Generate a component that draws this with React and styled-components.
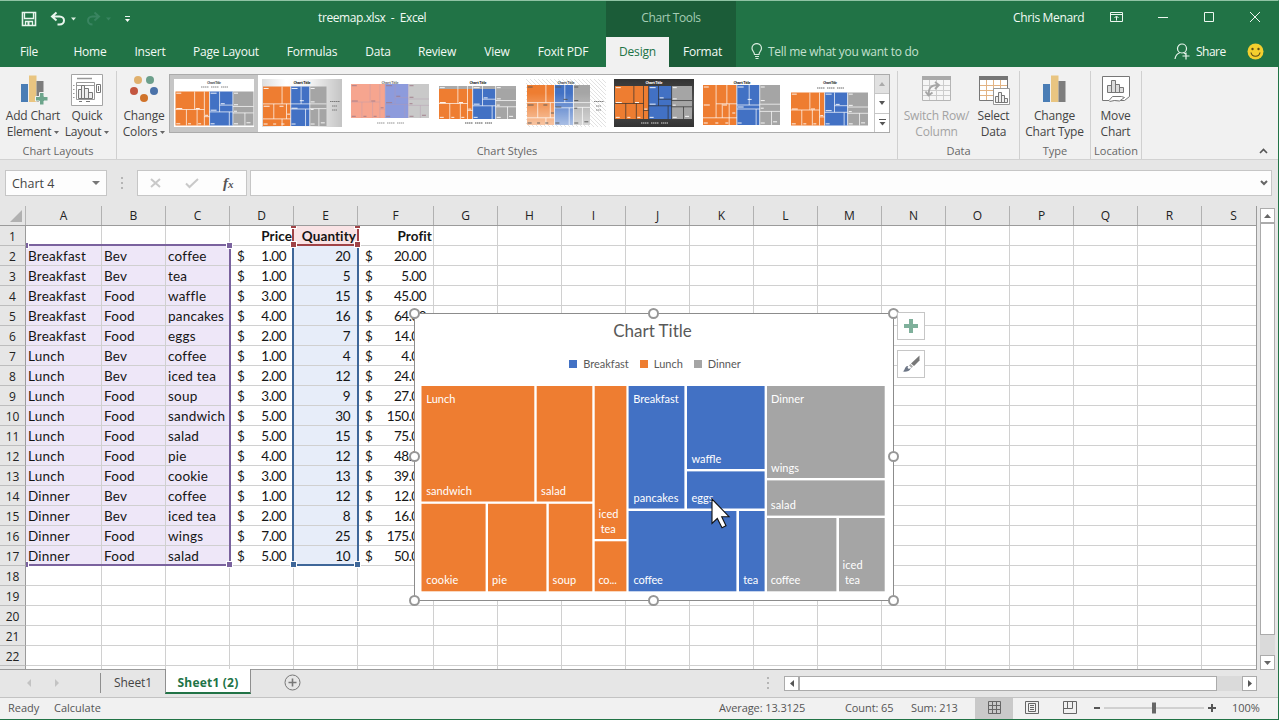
import React from "react";
import styled, { createGlobalStyle, css } from "styled-components";

// Column letters with their widths
const columns = [
  ["A", 76], ["B", 64], ["C", 64], ["D", 64], ["E", 64], ["F", 76],
  ["G", 64], ["H", 64], ["I", 64], ["J", 64], ["K", 64], ["L", 64],
  ["M", 64], ["N", 64], ["O", 64], ["P", 64], ["Q", 64], ["R", 64], ["S", 64],
];
const template = "26px " + columns.map((c) => `${c[1]}px`).join(" ");

const meals = [
  ["Breakfast", "Bev", "coffee", "1.00", 20, "20.00"],
  ["Breakfast", "Bev", "tea", "1.00", 5, "5.00"],
  ["Breakfast", "Food", "waffle", "3.00", 15, "45.00"],
  ["Breakfast", "Food", "pancakes", "4.00", 16, "64.00"],
  ["Breakfast", "Food", "eggs", "2.00", 7, "14.00"],
  ["Lunch", "Bev", "coffee", "1.00", 4, "4.00"],
  ["Lunch", "Bev", "iced tea", "2.00", 12, "24.00"],
  ["Lunch", "Food", "soup", "3.00", 9, "27.00"],
  ["Lunch", "Food", "sandwich", "5.00", 30, "150.00"],
  ["Lunch", "Food", "salad", "5.00", 15, "75.00"],
  ["Lunch", "Food", "pie", "4.00", 12, "48.00"],
  ["Lunch", "Food", "cookie", "3.00", 13, "39.00"],
  ["Dinner", "Bev", "coffee", "1.00", 12, "12.00"],
  ["Dinner", "Bev", "iced tea", "2.00", 8, "16.00"],
  ["Dinner", "Food", "wings", "7.00", 25, "175.00"],
  ["Dinner", "Food", "salad", "5.00", 10, "50.00"],
];

const tabs = [
  ["File", 58], ["Home", 64], ["Insert", 56], ["Page Layout", 96], ["Formulas", 76],
  ["Data", 56], ["Review", 62], ["View", 58], ["Foxit PDF", 74],
];

const BLUE = "#4271c4";
const ORANGE = "#ee7d31";
const GRAY = "#a5a5a5";

// x1, y1, x2, y2 inside the chart frame
const tiles = [
  [ORANGE, 7.5, 73, 120.3, 188.5],
  [ORANGE, 122.7, 73, 178.3, 188.5],
  [ORANGE, 180.7, 73, 212.4, 226],
  [ORANGE, 180.7, 228.3, 212.4, 278.3],
  [ORANGE, 7.5, 190.8, 71.6, 278.3],
  [ORANGE, 74, 190.8, 132.4, 278.3],
  [ORANGE, 134.8, 190.8, 178.3, 278.3],
  [BLUE, 214.6, 73, 270.4, 195.5],
  [BLUE, 273, 73, 350.6, 156],
  [BLUE, 273, 158.4, 350.6, 195.5],
  [BLUE, 214.6, 198, 322.4, 278.3],
  [BLUE, 325, 198, 350.6, 278.3],
  [GRAY, 353, 73, 470.7, 165],
  [GRAY, 353, 167.4, 470.7, 202.6],
  [GRAY, 353, 205, 422.4, 278.3],
  [GRAY, 425, 205, 470.7, 278.3],
];

// text, x, baseline, width
const tileLabels = [
  ["Lunch", 12.3, 89.5, 29], ["sandwich", 12.3, 181.5, 45.5], ["salad", 127, 181.5, 25],
  ["iced", 184.5, 204.5, 20], ["tea", 186.7, 219.5, 15], ["co...", 184.4, 270.5, 18.5],
  ["cookie", 12.3, 270.5, 32], ["pie", 78, 270.5, 15], ["soup", 138.6, 270.5, 23.5],
  ["Breakfast", 219.2, 89.5, 45.5], ["pancakes", 219.4, 188.5, 45], ["waffle", 277.4, 149.5, 30],
  ["eggs", 277.4, 188.5, 22], ["coffee", 219.4, 270.5, 29.5], ["tea", 329.2, 270.5, 15],
  ["Dinner", 357, 89.5, 33], ["wings", 357, 158.5, 28], ["salad", 356.8, 195.5, 25],
  ["coffee", 356.8, 270.5, 29.5], ["iced", 428.6, 255.5, 20], ["tea", 431, 270.5, 15],
];

// Divider lines of the previews, in fractions of the plot: x1, y1, x2, y2
const dividers = {
  wide: [
    [0, 0.53, 0.37, 0.53], [0.245, 0, 0.245, 0.53], [0.37, 0, 0.37, 1], [0.14, 0.53, 0.14, 1],
    [0.277, 0.53, 0.277, 1], [0.37, 0.74, 0.437, 0.74], [0.437, 0, 0.437, 1], [0.437, 0.6, 0.735, 0.6],
    [0.565, 0, 0.565, 0.6], [0.565, 0.4, 0.735, 0.4], [0.69, 0.6, 0.69, 1], [0.735, 0, 0.735, 1],
    [0.735, 0.44, 1, 0.44], [0.735, 0.63, 1, 0.63], [0.89, 0.63, 0.89, 1],
  ],
  narrow: [
    [0, 0.44, 0.437, 0.44], [0.3, 0, 0.3, 0.44], [0.17, 0.44, 0.17, 0.82], [0.37, 0.44, 0.37, 0.82],
    [0, 0.82, 0.437, 0.82], [0.3, 0.82, 0.3, 1], [0.437, 0, 0.437, 1], [0.437, 0.44, 0.737, 0.44],
    [0.6, 0, 0.6, 0.44], [0.437, 0.57, 0.737, 0.57], [0.67, 0.57, 0.67, 1], [0.737, 0, 0.737, 1],
    [0.737, 0.44, 1, 0.44], [0.737, 0.56, 1, 0.56], [0.88, 0.56, 0.88, 1],
  ],
  tall: [
    [0.17, 0, 0.17, 0.82], [0.31, 0, 0.31, 0.47], [0.17, 0.47, 0.44, 0.47], [0.25, 0.47, 0.25, 0.82],
    [0.34, 0.47, 0.34, 1], [0, 0.82, 0.44, 0.82], [0.44, 0, 0.44, 1], [0.44, 0.5, 0.737, 0.5],
    [0.6, 0, 0.6, 0.5], [0.44, 0.6, 0.737, 0.6], [0.69, 0.6, 0.69, 1], [0.737, 0, 0.737, 1],
    [0.737, 0.48, 1, 0.48], [0.737, 0.66, 1, 0.66], [0.89, 0.66, 0.89, 1],
  ],
};

// Tiny label strokes of the previews: x, y as fractions, length in pixels
const marks = [
  [0.01, 0.05, 5], [0.01, 0.5, 6], [0.26, 0.5, 4], [0.01, 0.95, 4], [0.16, 0.95, 3], [0.29, 0.95, 3],
  [0.38, 0.7, 3], [0.45, 0.05, 6], [0.45, 0.55, 6], [0.58, 0.36, 4], [0.45, 0.95, 4], [0.75, 0.05, 4],
  [0.75, 0.39, 4], [0.75, 0.58, 3], [0.75, 0.95, 4], [0.91, 0.92, 4],
];

const thumbs = [
  { x: 1.5, y: 12.5, w: 78, h: 34, title: "#666", legend: 8, selected: true },
  { x: 1, y: 7.5, w: 63.5, h: 39.5, title: "#222", side: true, bg: "url(#fade)", split: "narrow" },
  { x: 1, y: 5, w: 78, h: 34, title: "#777", legend: 44, pale: true },
  { x: 1, y: 7, w: 77, h: 33, title: "#222", legend: 44, banner: true },
  { x: 1, y: 6, w: 63, h: 40, title: "#555", side: true, bg: "url(#hatch)", soft: true, split: "narrow" },
  { x: 1, y: 7, w: 77, h: 33, title: "#fff", legend: 44, bg: "url(#dark)", line: "#303030" },
  { x: 1, y: 6, w: 77, h: 40, title: "#222", split: "tall" },
  { x: 1, y: 13.5, w: 77, h: 33, title: "#444", legend: 9 },
];

function Thumb({ x, y, w, h, title, legend, side, bg = "#fff", pale, soft, banner, line = "#fff", split = "wide" }) {
  const fill = pale ? ["#f6a58f", "#8d9bdc", "#c9c9c9"] : [ORANGE, BLUE, GRAY];
  const lines = dividers[split].map(([x1, y1, x2, y2]) => `M${x1 * w} ${y1 * h}L${x2 * w} ${y2 * h}`).join("");
  const labels = marks.map(([mx, my, len]) => `M${mx * w} ${my * h}h${len}`).join("");
  return (
    <svg width="80" height="48" viewBox="0 0 80 48">
      <defs>
        <linearGradient id="fade"><stop stopColor="#ddd" /><stop offset=".3" stopColor="#fff" /><stop offset=".6" stopColor="#f4f4f4" /><stop offset="1" stopColor="#c4c4c4" /></linearGradient>
        <linearGradient id="dark" x2="0" y2="1"><stop stopColor="#333" /><stop offset=".5" stopColor="#555" /><stop offset="1" stopColor="#333" /></linearGradient>
        <linearGradient id="haze" x2="0" y2="1"><stop offset=".2" stopColor="#fff" stopOpacity="0" /><stop offset="1" stopColor="#fff" stopOpacity=".55" /></linearGradient>
        <pattern id="hatch" width="4" height="4" patternUnits="userSpaceOnUse">
          <path d="M0 0L4 4" stroke="#d6d6d6" strokeWidth=".7" />
        </pattern>
      </defs>
      <rect width="80" height="48" fill={bg} />
      <ThumbTitle x="40" y="4.5" textAnchor="middle" textLength={legend && legend < 10 ? 14 : 17} fill={title}>Chart Title</ThumbTitle>
      <g transform={`translate(${x} ${y})`}>
        <rect width={w * 0.437} height={h} fill={fill[0]} />
        <rect x={w * 0.437} width={w * 0.3} height={h} fill={fill[1]} />
        <rect x={w * 0.737} width={w * 0.263} height={h} fill={fill[2]} />
        {soft && <rect width={w} height={h} fill="url(#haze)" />}
        {banner && <path d={`M0 1.5H${w}`} stroke="#aaa" strokeWidth="3" />}
        <path d={lines} stroke={pale ? "#b79ab0" : line} strokeWidth={pale ? 0.4 : 0.7} />
        <path d={labels} stroke={pale ? "#a07a88" : soft ? "#555" : "#fff"} strokeWidth=".9" />
      </g>
      {legend && <path d={`M27 ${legend}h8m2 0h8m2 0h7`} stroke={title} strokeWidth=".8" strokeDasharray="1.5 .5" />}
      {side && <path d="M68 22.500h10M70 27h5M70 31h5" stroke="#666" strokeWidth=".8" strokeDasharray="1.5 .4" />}
    </svg>
  );
}

function BarsIcon({ plus }) {
  return (
    <svg width="30" height="34" viewBox="0 0 30 34">
      <path d="M3 10h7v18H3z" fill="#4a7db5" />
      <path d="M11 1.500h7.500V28H11z" fill="#e9c581" />
      <path d="M18.500 7h7v21h-7z" fill="#7d7d7d" />
      {plus && <path d="M21.500 18.500h4.500v4h4v4.500h-4v4h-4.500v-4h-4v-4.500h4z" fill="#6da58c" stroke="#f1f1f1" />}
    </svg>
  );
}

function LayoutIcon() {
  return (
    <svg width="32" height="34" viewBox="0 0 32 34" fill="none" stroke="#777">
      <path d="M.5.500h31v31H.5z" fill="#fff" stroke="#a5a5a5" />
      <path d="M6 4.500h15" stroke="#999" strokeWidth="1.500" />
      <path d="M5.500 8.500h18v17h-18zM5.500 11.500h18M2 11.500h1.500m-1.500 4h1.500m-1.500 4h1.500m-1.500 4h1.500" stroke="#999" />
      <path d="M7.500 24.500V15.500h3v9V11.500h3v13V14.500h4v10V18.500h4v6z" fill="#eee" />
      <path d="M25.500 10.500h4v8h-4zM27.500 12v5M8 27.500h3m4 0h4" />
    </svg>
  );
}

function ColorsIcon() {
  return (
    <svg width="30" height="34" viewBox="0 0 30 34">
      <circle cx="9" cy="6" r="4" fill="#e0b06d" />
      <circle cx="21" cy="6" r="4" fill="#6c9f8b" />
      <circle cx="5" cy="17" r="4" fill="#c3563f" />
      <circle cx="25" cy="17" r="4" fill="#4b72a9" />
      <circle cx="15" cy="24" r="4" fill="#d0732a" />
    </svg>
  );
}

function TableIcon({ faded }) {
  return (
    <svg width="34" height="34" viewBox="0 0 34 34" fill="none">
      <path d="M2.500 2.500h28v24h-28z" fill={faded ? "#f6f6f6" : "#fff"} stroke={faded ? "#b5b5b5" : "#777"} />
      <path d="M2 2h29v4H2z" fill={faded ? "#aaa" : "#757575"} />
      <path d="M9.500 6v20M16.500 6v20M23.500 6v20M3 11.500h27M3 16.500h27M3 21.500h27" stroke={faded ? "#ccc" : "#e2b383"} />
      {faded ? (
        <path d="M8.500 21C8.500 14 11 11 18 11M15 8l4 3-4 4M5.500 17.500l3 4 4-3" stroke="#a5a5a5" strokeWidth="1.800" />
      ) : (
        <>
          <path d="M16.500 14.500h16v16h-16z" fill="#fff" stroke="#999" />
          <path d="M18.500 28.500V22.500h3v6V18.500h3v10V21.500h3v7V24.500h3v4z" fill="#eee" stroke="#777" />
        </>
      )}
    </svg>
  );
}

function MoveIcon() {
  return (
    <svg width="30" height="34" viewBox="0 0 30 34" fill="none" stroke="#777">
      <path d="M8 26.500H1.500v-24h27v20l-5 4z" fill="#fff" />
      <path d="M6.500 18.500v-7h4v7V6.500h4v12V10.500h4v8V13.500h4v5z" fill="#ddd" />
      <path d="M8 26.500l3.500-4h9l3 1-5 3.500-5-.5-5 1" fill="#fff" />
    </svg>
  );
}

function QuickIcons() {
  return (
    <svg width="140" height="30" viewBox="0 0 140 30" fill="none" stroke="#e9f5ed">
      <path d="M22.500 11.500h13v13h-13z" strokeWidth="1.600" />
      <path d="M24.500 12v5.500h9V12M25.500 24.500v-4h7v4" strokeWidth="1.300" />
      <path d="M28.500 21v3" strokeWidth="2" />
      <path d="M56.500 11.500l-4.500 4 4.500 4M52.500 15.500h7c6 0 6 8 0 8h-2" strokeWidth="2" />
      <path d="M71 16.500h5l-2.500 3z" fill="#dcefe2" stroke="none" />
      <path d="M94.500 11.500l4.500 4-4.500 4M98.500 15.500h-6c-6 0-6 8 0 8" stroke="#398460" strokeWidth="2" />
      <path d="M106 16.500h5l-2.500 3z" fill="#398460" stroke="none" />
      <path d="M125 15.500h5" strokeWidth="1" />
      <path d="M125 18h5l-2.500 3z" fill="#fff" stroke="none" />
    </svg>
  );
}

function WindowIcons() {
  return (
    <svg width="160" height="20" viewBox="0 0 160 20" fill="none" stroke="#edf7f0">
      <path d="M.5 3.500h12v9H.5zM.5 5.500h12M6.500 11.500v-4M4.500 9l2-2 2 2" />
      <path d="M48 8.500h10" />
      <path d="M94.500 3.500h9v9h-9z" />
      <path d="M140 3l10 10M150 3l-10 10" />
    </svg>
  );
}

function Treemap() {
  return (
    <svg width="480" height="287" viewBox="0 0 480 287">
      {tiles.map(([fill, x1, y1, x2, y2], i) => (
        <rect key={i} x={x1} y={y1} width={x2 - x1} height={y2 - y1} fill={fill} />
      ))}
      {tileLabels.map(([text, x, y, w], i) => (
        <ChartText key={i} x={x} y={y} textLength={w}>{text}</ChartText>
      ))}
    </svg>
  );
}

function Caret() {
  return (
    <svg width="5" height="3" viewBox="0 0 5 3"><path d="M0 0h5L2.500 3z" fill="#666" /></svg>
  );
}

function App() {
  return (
    <Window>
      <GlobalStyle />
      <Header>
        <TitleBar>
          <QuickIcons />
          <FileName>treemap.xlsx&nbsp; -&nbsp; Excel</FileName>
          <ToolsLabel>Chart Tools</ToolsLabel>
          <UserName>Chris Menard</UserName>
          <WindowIcons />
        </TitleBar>
        <TabRow>
          {tabs.map(([name, w]) => <Tab key={name} $w={w}>{name}</Tab>)}
          <Spacer $w={6} />
          <Tab $w={63} $active>Design</Tab>
          <Tab $w={67} $dark>Format</Tab>
          <TellMe>
            <svg width="12" height="17" viewBox="0 0 12 17" fill="none" stroke="#d5eadc">
              <path d="M3.500 11.500C3.500 9 1 8 1 5.300a4.700 4.700 0 019.500 0C10.500 8 8 9 8 11.500zM4 13.500h4M4.500 15.500h3" strokeWidth="1.200" />
            </svg>
            Tell me what you want to do
          </TellMe>
          <Share>
            <svg width="17" height="17" viewBox="0 0 17 17" fill="none" stroke="#e9f5ed" strokeWidth="1.200">
              <circle cx="8" cy="5.500" r="4.500" />
              <path d="M1 16c.5-4 2.500-5.500 5-6.500M9.500 9.500l2 1.500M8.500 13h7M12 9.500v7" />
            </svg>
            Share
          </Share>
          <Smile width="17" height="17" viewBox="0 0 17 17">
            <circle cx="8.500" cy="8.500" r="8" fill="#f4cf2e" />
            <circle cx="5.500" cy="6" r="1.200" fill="#5e4b16" />
            <circle cx="11.500" cy="6" r="1.200" fill="#5e4b16" />
            <path d="M4 9.500c1 5 8 5 9 0" fill="none" stroke="#5e4b16" strokeWidth="1.200" />
          </Smile>
        </TabRow>
      </Header>

      <Ribbon>
        <Group $w={117}>
          <Tools>
            <Tool $w={66}><BarsIcon plus /><span>Add Chart</span><span>Element <Caret /></span></Tool>
            <Tool $w={42}><LayoutIcon /><span>Quick</span><span>Layout <Caret /></span></Tool>
          </Tools>
          <GroupName>Chart Layouts</GroupName>
        </Group>
        <Group $w={781}>
          <Tools>
            <Tool $w={54}><ColorsIcon /><span>Change</span><span>Colors <Caret /></span></Tool>
            <Gallery>
              {thumbs.map((t, i) => (
                <ThumbSlot key={i} $selected={t.selected}><Thumb {...t} /></ThumbSlot>
              ))}
              <GalleryScroll>
                <GalleryButton $off><svg width="6" height="4"><path d="M0 4h6L3 0z" fill="#aaa" /></svg></GalleryButton>
                <GalleryButton><svg width="6" height="4"><path d="M0 0h6L3 4z" fill="#555" /></svg></GalleryButton>
                <GalleryButton><svg width="7" height="7"><path d="M0 .5h7" stroke="#555" /><path d="M.5 3h6l-3 3.500z" fill="#555" /></svg></GalleryButton>
              </GalleryScroll>
            </Gallery>
          </Tools>
          <GroupName>Chart Styles</GroupName>
        </Group>
        <Group $w={122}>
          <Tools $pad={1}>
            <Tool $w={75} $faded><TableIcon faded /><span>Switch Row/</span><span>Column</span></Tool>
            <Tool $w={39}><TableIcon /><span>Select</span><span>Data</span></Tool>
          </Tools>
          <GroupName>Data</GroupName>
        </Group>
        <Group $w={71}>
          <Tools $pad={0}><Tool $w={69}><BarsIcon /><span>Change</span><span>Chart Type</span></Tool></Tools>
          <GroupName>Type</GroupName>
        </Group>
        <Group $w={51}>
          <Tools $pad={0}><Tool $w={49}><MoveIcon /><span>Move</span><span>Chart</span></Tool></Tools>
          <GroupName>Location</GroupName>
        </Group>
        <Collapse width="9" height="6" viewBox="0 0 9 6"><path d="M1 5l3.500-3.500L8 5" fill="none" stroke="#555" strokeWidth="1.600" /></Collapse>
      </Ribbon>

      <FormulaBar>
        <NameBox>Chart 4<svg width="8" height="4"><path d="M0 0h8L4 4z" fill="#777" /></svg></NameBox>
        <Grip width="2" height="12"><path d="M0 0h2v2H0zM0 5h2v2H0zM0 10h2v2H0z" fill="#b5b5b5" /></Grip>
        <FxBox>
          <svg width="58" height="14" viewBox="0 0 58 14" fill="none" stroke="#c9c9c9" strokeWidth="2">
            <path d="M4 3l9 8M13 3l-9 8M39 7.500l3.500 3.500L51 3" />
          </svg>
          <Fx>f<small>x</small></Fx>
        </FxBox>
        <FormulaInput><svg width="8" height="6"><path d="M1 1l3 3 3-3" fill="none" stroke="#666" strokeWidth="2" /></svg></FormulaInput>
      </FormulaBar>

      <SheetArea>
        <Sheet>
          <HeadRow>
            <Corner><svg width="12" height="12"><path d="M12 0v12H0z" fill="#b1b1b1" /></svg></Corner>
            {columns.map(([c]) => <ColHead key={c}>{c}</ColHead>)}
          </HeadRow>
          {Array.from({ length: 23 }, (_, r) => {
            const meal = meals[r - 1];
            return (
              <Row key={r}>
                <RowHead>{r < 22 && r + 1}</RowHead>
                {columns.map(([c], i) => {
                  if (r === 0) {
                    const title = { D: "Price", E: "Quantity", F: "Profit" }[c];
                    return <Cell key={c} $head $fill={c === "E" && "#f9e3e5"}>{title}</Cell>;
                  }
                  if (!meal || i > 5) return <Cell key={c} />;
                  if (i < 3) return <Cell key={c} $fill="#eee7f8">{meal[i]}</Cell>;
                  if (i === 4) return <Cell key={c} $number $fill="#e7edf9">{meal[i]}</Cell>;
                  return <Cell key={c} $number $money><span>$</span><span>{meal[i]}</span></Cell>;
                })}
              </Row>
            );
          })}

          <Range $x={26} $y={38} $w={205} $h={322} $color="#7a629e" $noLeft>
            <Knob $x={0} $y={0} /><Knob $x={1} $y={0} /><Knob $x={0} $y={1} /><Knob $x={1} $y={1} />
          </Range>
          <Range $x={292} $y={38} $w={67} $h={322} $color="#3f6799">
            <Knob $x={0} $y={1} /><Knob $x={1} $y={1} />
          </Range>
          <Range $x={292} $y={18} $w={67} $h={22} $color="#a04347" $noTop>
            <Knob $x={0} $y={0} /><Knob $x={1} $y={0} /><Knob $x={0} $y={1} /><Knob $x={1} $y={1} />
          </Range>

          <ChartFrame>
            <ChartTitle>Chart Title</ChartTitle>
            <Legend>
              <LegendItem $color={BLUE}>Breakfast</LegendItem>
              <LegendItem $color={ORANGE}>Lunch</LegendItem>
              <LegendItem $color={GRAY}>Dinner</LegendItem>
            </Legend>
            <Plot><Treemap /></Plot>
            {[[0, 0], [1, 0], [2, 0], [0, 1], [2, 1], [0, 2], [1, 2], [2, 2]].map(([x, y]) => (
              <Handle key={`${x}${y}`} $x={x} $y={y} />
            ))}
            <SideButtons>
              <SideButton><svg width="14" height="14"><path d="M5 0h4v5h5v4H9v5H5V9H0V5h5z" fill="#7fb09b" /></svg></SideButton>
              <SideButton>
                <svg width="18" height="18" viewBox="0 0 18 18">
                  <path d="M17.500.5v5L12 11 9 8.500z" fill="#777" />
                  <path d="M8.500 9l2.500 2.500-1.500 1.500L7 10.500z" fill="#aaa" />
                  <path d="M.5 16.500c2.500-.5 2-5 5-5.500l3.200 2.500C7.500 16.500 4 17 .5 16.500z" fill="#6d7686" />
                  <circle cx="7" cy="12.500" r="1.300" fill="#fff" />
                </svg>
              </SideButton>
            </SideButtons>
            <Pointer width="20" height="32" viewBox="0 0 20 32">
              <path d="M1 1v24.500l5.300-5 4.700 9.200 4-2-4.300-9H18z" fill="#fff" stroke="#111" strokeWidth="1.100" />
            </Pointer>
          </ChartFrame>
        </Sheet>
        <VScroll>
          <ScrollButton><svg width="7" height="4"><path d="M0 4h7L3.500 0z" fill="#666" /></svg></ScrollButton>
          <VThumb />
          <ScrollButton><svg width="7" height="4"><path d="M0 0h7L3.500 4z" fill="#666" /></svg></ScrollButton>
        </VScroll>
      </SheetArea>

      <SheetTabs>
        <TabArrows width="34" height="8"><path d="M4 0v8L0 4z M28 0v8l4-4z" fill="#c3c3c3" /></TabArrows>
        <SheetTab>Sheet1</SheetTab>
        <SheetTab $active>Sheet1 (2)</SheetTab>
        <AddSheet width="17" height="17" fill="none" stroke="#777"><circle cx="8.500" cy="8.500" r="7.500" /><path d="M8.500 4.500v8M4.500 8.500h8" strokeWidth="1.600" /></AddSheet>
        <Grip width="2" height="12"><path d="M0 0h2v2H0zM0 5h2v2H0zM0 10h2v2H0z" fill="#b5b5b5" /></Grip>
        <HScroll>
          <ScrollButton><svg width="4" height="7"><path d="M4 0v7L0 3.500z" fill="#555" /></svg></ScrollButton>
          <HThumb />
          <ScrollButton><svg width="4" height="7"><path d="M0 0v7l4-3.500z" fill="#555" /></svg></ScrollButton>
        </HScroll>
      </SheetTabs>

      <StatusBar>
        <Status $w={46}>Ready</Status>
        <Status $w={665}>Calculate</Status>
        <Status $w={126} $tight>Average: 13.3125</Status>
        <Status $w={66} $tight>Count: 65</Status>
        <Status $w={64} $tight>Sum: 213</Status>
        <View $on><svg width="13" height="13" fill="none" stroke="#666"><path d="M.5.500h12v12H.5zM4.500 0v13M8.500 0v13M0 4.500h13M0 8.500h13" /></svg></View>
        <View><svg width="14" height="13" fill="none" stroke="#666"><path d="M.5.500h13v12H.5zM3.500 2.500h7v8h-7zM5 4.500h4M5 6.500h4M5 8.500h4" /></svg></View>
        <View><svg width="14" height="13" fill="none" stroke="#666"><path d="M.5.500h13v12H.5zM4.500 0v7.500M9.500 0v7.500M.5 7.500h9" /></svg></View>
        <Zoom width="127" height="14" viewBox="0 0 127 14">
          <path d="M5 6h6v2H5z" fill="#555" />
          <path d="M15 7h100" stroke="#b0b0b0" />
          <path d="M63 1.500h4v11h-4z" fill="#666" />
          <path d="M119 7h8M123 3v8" stroke="#555" strokeWidth="2" />
        </Zoom>
        <ZoomValue>100%</ZoomValue>
      </StatusBar>
    </Window>
  );
}

export default App;

// Styled Components
const GlobalStyle = createGlobalStyle`
  * { box-sizing: border-box; }
  body {
    margin: 0;
    overflow: hidden;
    font-family: "Open Sans", "Noto Sans", sans-serif;
    font-size: 12px;
    color: #444;
  }
  svg { display: block; flex: none; }
`;

const Window = styled.div`
  width: 1279px;
  height: 720px;
  display: flex;
  flex-direction: column;
  background: #e6e6e6;
  border-top: 1px solid #8fc3a4;
  border-right: 1px solid #217346;
  border-bottom: 1px solid #217346;
`;

const Header = styled.header`
  height: 66px;
  flex: none;
  background: #217346;
  color: #f2faf5;
`;

const TitleBar = styled.div`
  height: 36px;
  display: flex;
  align-items: center;

  > svg:first-child {
    margin-top: -7px;
  }
`;

const FileName = styled.div`
  width: 466px;
  padding-left: 178px;
  letter-spacing: -0.4px;
  margin-top: -3px;
`;

const ToolsLabel = styled.div`
  width: 130px;
  height: 100%;
  padding-top: 8px;
  text-align: center;
  background: #1b5c38;
  color: #a5cdb5;
  letter-spacing: -0.65px;
  letter-spacing: -0.4px;
`;

const UserName = styled.div`
  width: 374px;
  padding-left: 277px;
  margin-top: -3px;
  letter-spacing: -0.35px;
`;

const TabRow = styled.nav`
  height: 30px;
  display: flex;
  align-items: center;
`;

const Tab = styled.div`
  width: ${(p) => p.$w}px;
  height: 30px;
  line-height: 30px;
  text-align: center;
  letter-spacing: -0.2px;
  flex: none;
  ${(p) => p.$active && css`
    background: #f1f1f1;
    color: #217346;
  `}
  ${(p) => p.$dark && css`
    background: #1b5c38;
  `}
`;

const Spacer = styled.div`
  width: ${(p) => p.$w}px;
`;

const TellMe = styled.div`
  width: 438px;
  margin-top: -1px;
  padding-left: 15px;
  display: flex;
  align-items: center;
  gap: 5px;
  color: #c4e0cf;
  letter-spacing: -0.27px;
`;

const Share = styled.div`
  width: 73px;
  margin-top: -1px;
  display: flex;
  align-items: center;
  gap: 5px;
  letter-spacing: -0.5px;
`;

const Smile = styled.svg`
  margin-top: -2px;
`;

const Ribbon = styled.section`
  height: 93px;
  flex: none;
  display: flex;
  background: #f1f1f1;
  border-bottom: 1px solid #d2d2d2;
`;

const Group = styled.div`
  width: ${(p) => p.$w}px;
  height: 88px;
  margin-top: 4px;
  border-right: 1px solid #d0d0d0;
  flex: none;
`;

const Tools = styled.div`
  height: 72px;
  display: flex;
  padding-left: ${(p) => p.$pad || 0}px;
`;

const Tool = styled.div`
  width: ${(p) => p.$w}px;
  display: flex;
  flex-direction: column;
  align-items: center;
  flex: none;
  line-height: 16px;
  white-space: nowrap;
  letter-spacing: -0.2px;
  padding-top: 3px;
  color: ${(p) => (p.$faded ? "#a3a3a3" : "#444")};

  span {
    display: flex;
    align-items: center;
    gap: 3px;
  }
`;

const GroupName = styled.div`
  font-size: 11px;
  line-height: 16px;
  text-align: center;
  color: #666;
  white-space: nowrap;
`;

const Gallery = styled.div`
  width: 721px;
  height: 59px;
  margin: 3px 0 0 -2px;
  display: flex;
  flex: none;
  border: 1px solid #ababab;
  background: #fff;
`;

const ThumbSlot = styled.div`
  width: 88px;
  height: 57px;
  padding: 4px;
  flex: none;
  background: ${(p) => (p.$selected ? "#c6c6c6" : "#fff")};
`;

const ThumbTitle = styled.text`
  font-size: 3.8px;
  font-weight: 700;
`;

const GalleryScroll = styled.div`
  flex: 1;
  display: flex;
  flex-direction: column;
  border-left: 1px solid #c6c6c6;
`;

const GalleryButton = styled.div`
  flex: 1;
  display: flex;
  align-items: center;
  justify-content: center;
  border-bottom: 1px solid #c6c6c6;
  background: ${(p) => (p.$off ? "#e1e1e1" : "#fff")};

  &:last-child {
    border-bottom: none;
  }
`;

const Collapse = styled.svg`
  margin: 81px 0 0 117px;
`;

const FormulaBar = styled.div`
  height: 46px;
  flex: none;
  padding: 10px 6px 10px 5px;
  display: flex;
`;

const Box = styled.div`
  background: #fdfdfd;
  border: 1px solid #c6c6c6;
  display: flex;
  align-items: center;
`;

const NameBox = styled(Box)`
  width: 102px;
  justify-content: space-between;
  padding: 0 6px;
  font-size: 12.5px;
`;

const Grip = styled.svg`
  margin: 7px 14px;
`;

const FxBox = styled(Box)`
  width: 110px;
  padding-left: 9px;
`;

const Fx = styled.i`
  margin-left: 18px;
  font: italic 700 15px "Liberation Serif", serif;
  color: #555;

  small {
    font-size: 11px;
  }
`;

const FormulaInput = styled(Box)`
  flex: 1;
  margin-left: 3px;
  justify-content: flex-end;
  padding-right: 3px;
`;

const SheetArea = styled.main`
  height: 464px;
  flex: none;
  display: flex;
`;

const Sheet = styled.div`
  position: relative;
  width: 1257px;
  flex: none;
  overflow: hidden;
  border-right: 1px solid #9b9b9b;
  border-bottom: 1px solid #9b9b9b;
  font-family: Lato, "Open Sans", sans-serif;
`;

const HeadRow = styled.div`
  display: grid;
  grid-template-columns: ${template};
  grid-template-rows: 19px;
  height: 20px;
  width: 1270px;
  background: #e6e6e6;
  border-bottom: 1px solid #9b9b9b;
`;

const Corner = styled.div`
  display: flex;
  justify-content: flex-end;
  align-items: flex-end;
  padding: 0 3px 3px 0;
  border-right: 1px solid #b5b5b5;
`;

const ColHead = styled.div`
  text-align: center;
  line-height: 20px;
  font-family: "Open Sans", sans-serif;
  font-size: 12px;
  color: #222;
  border-right: 1px solid #b1b1b1;
`;

const Row = styled.div`
  display: grid;
  grid-template-columns: ${template};
  grid-template-rows: 20px;
  height: 20px;
  background: #fff;
`;

const RowHead = styled.div`
  background: #e6e6e6;
  border-right: 1px solid #9b9b9b;
  border-bottom: 1px solid #bdbdbd;
  text-align: center;
  line-height: 21px;
  font-family: "Open Sans", sans-serif;
  font-size: 12px;
  color: #222;
`;

const Cell = styled.div`
  border-right: 1px solid #d0d0d0;
  border-bottom: 1px solid #d0d0d0;
  padding: 0 0 0 2px;
  font-size: 13.5px;
  line-height: 20px;
  letter-spacing: 0.22px;
  white-space: nowrap;
  color: #151515;
  background: ${(p) => p.$fill || "transparent"};
  ${(p) => p.$number && css`
    text-align: right;
    padding-right: 7px;
    letter-spacing: -0.5px;
  `}
  ${(p) => p.$head && css`
    text-align: right;
    padding-right: 1px;
    font-weight: 700;
    letter-spacing: 0.1px;
  `}
  ${(p) => p.$money && css`
    display: flex;
    justify-content: space-between;
    padding-left: 7px;
  `}
`;

const Range = styled.div`
  position: absolute;
  left: ${(p) => p.$x}px;
  top: ${(p) => p.$y}px;
  width: ${(p) => p.$w}px;
  height: ${(p) => p.$h}px;
  color: ${(p) => p.$color};
  border: 2px solid;
  ${(p) => p.$noLeft && css`
    border-left: none;
    clip-path: inset(-4px -4px -4px 0);
  `}
  ${(p) => p.$noTop && css`
    clip-path: inset(2px -4px -4px -4px);
  `}
`;

const Knob = styled.div`
  position: absolute;
  width: 5px;
  height: 5px;
  background: currentColor;
  outline: 1px solid #fff;
  left: ${(p) => (p.$x ? "auto" : "-3px")};
  right: ${(p) => (p.$x ? "-3px" : "auto")};
  top: ${(p) => (p.$y ? "auto" : "-3px")};
  bottom: ${(p) => (p.$y ? "-3px" : "auto")};
`;

// The frame floats over the cells
const ChartFrame = styled.div`
  position: absolute;
  left: 414px;
  top: 107px;
  width: 480px;
  height: 288px;
  background: #fff;
  border: 1px solid #8c8c8c;
`;

const ChartTitle = styled.div`
  padding: 5px 3px 0 0;
  text-align: center;
  font-size: 17px;
  line-height: 24px;
  color: #595959;
`;

const Legend = styled.div`
  display: flex;
  justify-content: center;
  gap: 11px;
  margin-top: 13px;
  padding-left: 2px;
`;

const LegendItem = styled.div`
  font-size: 11px;
  line-height: 16px;
  color: #595959;
  display: flex;
  align-items: center;
  gap: 6px;

  &::before {
    content: "";
    width: 8px;
    height: 8px;
    background: ${(p) => p.$color};
  }
`;

const Plot = styled.div`
  position: absolute;
  inset: -1px;
`;

const ChartText = styled.text`
  font-size: 11px;
  fill: #fff;
`;

const Handle = styled.div`
  position: absolute;
  width: 11px;
  height: 11px;
  left: ${(p) => -6 + Math.floor(p.$x * 239.5)}px;
  top: ${(p) => -6 + Math.floor(p.$y * 143.5)}px;
  border: 2px solid #979797;
  border-radius: 50%;
  background: #fff;
`;

const SideButtons = styled.div`
  position: absolute;
  left: 482px;
  top: -2px;
  display: flex;
  flex-direction: column;
  gap: 10px;
`;

const SideButton = styled.div`
  width: 28px;
  height: 28px;
  display: flex;
  align-items: center;
  justify-content: center;
  background: #fff;
  border: 1px solid #c6c6c6;
`;

const Pointer = styled.svg`
  position: absolute;
  left: 296px;
  top: 184px;
`;

const VScroll = styled.div`
  width: 15px;
  margin: 2px 0 0 3px;
  display: flex;
  flex-direction: column;
  background: #dadada;
`;

const ScrollButton = styled.div`
  width: 15px;
  height: 15px;
  flex: none;
  display: flex;
  align-items: center;
  justify-content: center;
  background: #fff;
  border: 1px solid #ababab;
`;

const VThumb = styled.div`
  height: 412px;
  margin-bottom: auto;
  background: #fff;
  border: 1px solid #ababab;
`;

const SheetTabs = styled.div`
  height: 28px;
  flex: none;
  display: flex;
  border-bottom: 1px solid #c3c3c3;
`;

const TabArrows = styled.svg`
  margin: 9px 39px 0 27px;
`;

const SheetTab = styled.div`
  width: 65px;
  height: 20px;
  flex: none;
  margin-top: 3px;
  line-height: 19px;
  text-align: center;
  letter-spacing: -0.1px;
  border-left: 1px solid #8f8f8f;
  ${(p) => p.$active && css`
    position: relative;
    width: 86px;
    height: 25px;
    margin-top: -1px;
    line-height: 27px;
    background: #fff;
    color: #217346;
    font-weight: 700;
    letter-spacing: 0.2px;
    border-right: 1px solid #8f8f8f;
    border-bottom: 2px solid #217346;
  `}
`;

const AddSheet = styled.svg`
  margin: 4px 452px 0 33px;
`;

const HScroll = styled.div`
  width: 473px;
  height: 15px;
  flex: none;
  margin: 6px 0 0 1px;
  display: flex;
  background: #dadada;
`;

const HThumb = styled.div`
  width: 418px;
  margin-right: auto;
  background: #fff;
  border: 1px solid #ababab;
`;

const StatusBar = styled.footer`
  flex: 1;
  display: flex;
  align-items: center;
  padding-left: 8px;
  background: #f1f1f1;
`;

const Status = styled.div`
  width: ${(p) => p.$w}px;
  flex: none;
  margin-top: -2px;
  font-size: 11px;
  color: #555;
  letter-spacing: ${(p) => (p.$tight ? "-0.1px" : "0")};
`;

const View = styled.div`
  width: 38px;
  height: 100%;
  flex: none;
  display: flex;
  align-items: center;
  justify-content: center;
  padding-bottom: 2px;
  background: ${(p) => (p.$on ? "#c9c9c9" : "transparent")};
`;

const Zoom = styled.svg`
  margin-top: -2px;
`;

const ZoomValue = styled.div`
  margin: -2px 0 0 16px;
  font-size: 11px;
  color: #555;
`;
